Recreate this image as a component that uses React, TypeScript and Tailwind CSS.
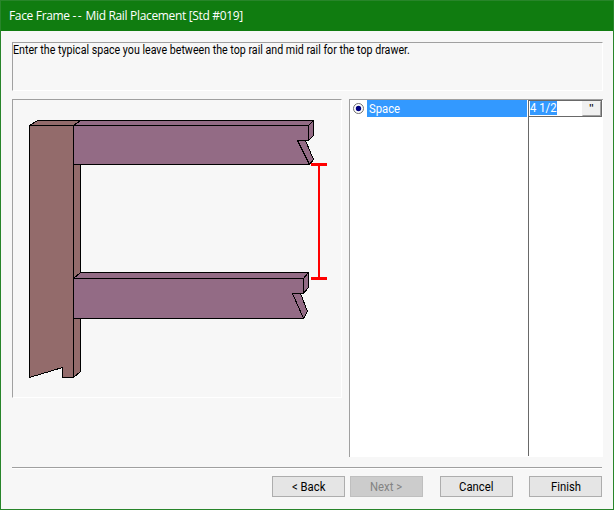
import type { ReactNode } from "react";

const UI_FONT = "font-[Roboto,'Liberation_Sans',Arial,sans-serif]";

function RailDrawing() {
  return (
    <svg
      width="328"
      height="297"
      viewBox="12.5 99.5 328 297"
      shapeRendering="crispEdges"
      stroke="#000"
      strokeWidth="1"
      className="block"
    >
      <g fill="#936b6b">
        <path d="M73 125L80 120V371L73 377Z" />
        <path d="M29 125L37 120H80L73 125Z" />
        <path d="M29 125H73V377H62V367L29 377Z" />
      </g>
      <g fill="#936b85">
        <path d="M73 125L80 120H313V135L308 140V125Z" />
        <path d="M308 125L313 120" />
        <path d="M297 140H305L313 159L309 164Z" />
        <path d="M73 125H308V140H297L309 164H73Z" />
        <path d="M73 278L80 272H308V287L303 293V278Z" />
        <path d="M303 278L308 272" />
        <path d="M292 293H300L307 311L303 318Z" />
        <path d="M73 278H303V293H292L303 318H73Z" />
      </g>
      <g fill="#f00" stroke="none">
        <rect x="310.5" y="162.5" width="16" height="3" />
        <rect x="317.5" y="162.5" width="2" height="117" />
        <rect x="310.5" y="276.5" width="16" height="3" />
      </g>
    </svg>
  );
}

function WizardButton({ children, disabled = false }: { children: ReactNode; disabled?: boolean }) {
  return (
    <button
      disabled={disabled}
      className={`flex h-[21px] w-[73px] items-center justify-center border pt-px text-[12px] leading-none ${
        disabled ? "border-[#bfbfbf] bg-[#cccccc] text-[#838383]" : "border-[#adadad] bg-[#e5e5e5] text-black"
      }`}
    >
      <span className="inline-block scale-x-[0.94]">{children}</span>
    </button>
  );
}

export default function App() {
  return (
    <div className={`flex h-[510px] w-[614px] flex-col border border-[#28852a] bg-[#f7f7f7] ${UI_FONT}`}>
      <header className="flex h-[30px] shrink-0 items-center bg-[#107c10] pl-2 font-['Open_Sans','Noto_Sans',sans-serif] text-[12px] leading-none tracking-[-0.33px] text-white">
        <span className="whitespace-nowrap">
          Face Frame <span className="tracking-[1.2px]">--</span> Mid Rail Placement [Std #019]
        </span>
      </header>

      <main className="flex flex-col pl-[11px] pr-[10px] pt-[11px]">
        <section className="h-[49px] border border-[#a0a0a0] border-b-white border-r-white text-[12px] leading-[14px] text-black">
          <span className="inline-block origin-left scale-x-[0.888] whitespace-nowrap">
            Enter the typical space you leave between the top rail and mid rail for the top drawer.
          </span>
        </section>

        <div className="mt-2 flex h-[358px] items-start gap-[7px]">
          <section className="h-[299px] w-[330px] shrink-0 border border-[#a0a0a0] border-b-white border-r-white">
            <RailDrawing />
          </section>

          <section className="flex h-[358px] w-[254px] shrink-0 border-l border-t border-[#a0a0a0] bg-white text-[12px] leading-none">
            <div className="flex h-[17px] w-[178px] shrink-0">
              <div className="flex w-[17px] items-center justify-center">
                <svg width="11" height="11" viewBox="0 0 11 11">
                  <circle cx="5.5" cy="5.5" r="5" fill="#fff" stroke="#707070" />
                  <circle cx="5.5" cy="5.5" r="2.7" fill="#000080" />
                </svg>
              </div>
              <div className="flex flex-1 items-center bg-[#3399ff] pl-[2px] pt-px text-[#ffffff]">
                <span className="inline-block origin-left scale-x-[0.94]">Space</span>
              </div>
              <div className="w-px" />
            </div>
            <div className="flex h-[356px] flex-1 flex-col border-l border-[#696969]">
              <div className="flex h-[17px] w-[73px] border-y border-r border-[#696969]">
                <div className="flex flex-1 items-start pl-px">
                  <span className="h-[14px] w-[27px] whitespace-nowrap bg-[#3399ff] leading-[14px] text-white">
                    <span className="inline-block origin-left scale-x-[0.94]">4 1/2</span>
                  </span>
                </div>
                <button className="flex w-[19px] items-start justify-center border border-[#f0f0f0] border-b-[#a0a0a0] border-r-[#a0a0a0] bg-[#f0f0f0] pt-px font-['Liberation_Sans',sans-serif] leading-none">
                  "
                </button>
              </div>
            </div>
          </section>
        </div>

        <div className="mt-[10px] h-[2px] w-[590px] border-b border-t border-[#a0a0a0] border-b-white" />

        <footer className="mr-px mt-[7px] flex justify-end">
          <WizardButton>&lt; Back</WizardButton>
          <div className="ml-[5px] mr-[17px]">
            <WizardButton disabled>Next &gt;</WizardButton>
          </div>
          <WizardButton>Cancel</WizardButton>
          <div className="ml-4">
            <WizardButton>Finish</WizardButton>
          </div>
        </footer>
      </main>
    </div>
  );
}
